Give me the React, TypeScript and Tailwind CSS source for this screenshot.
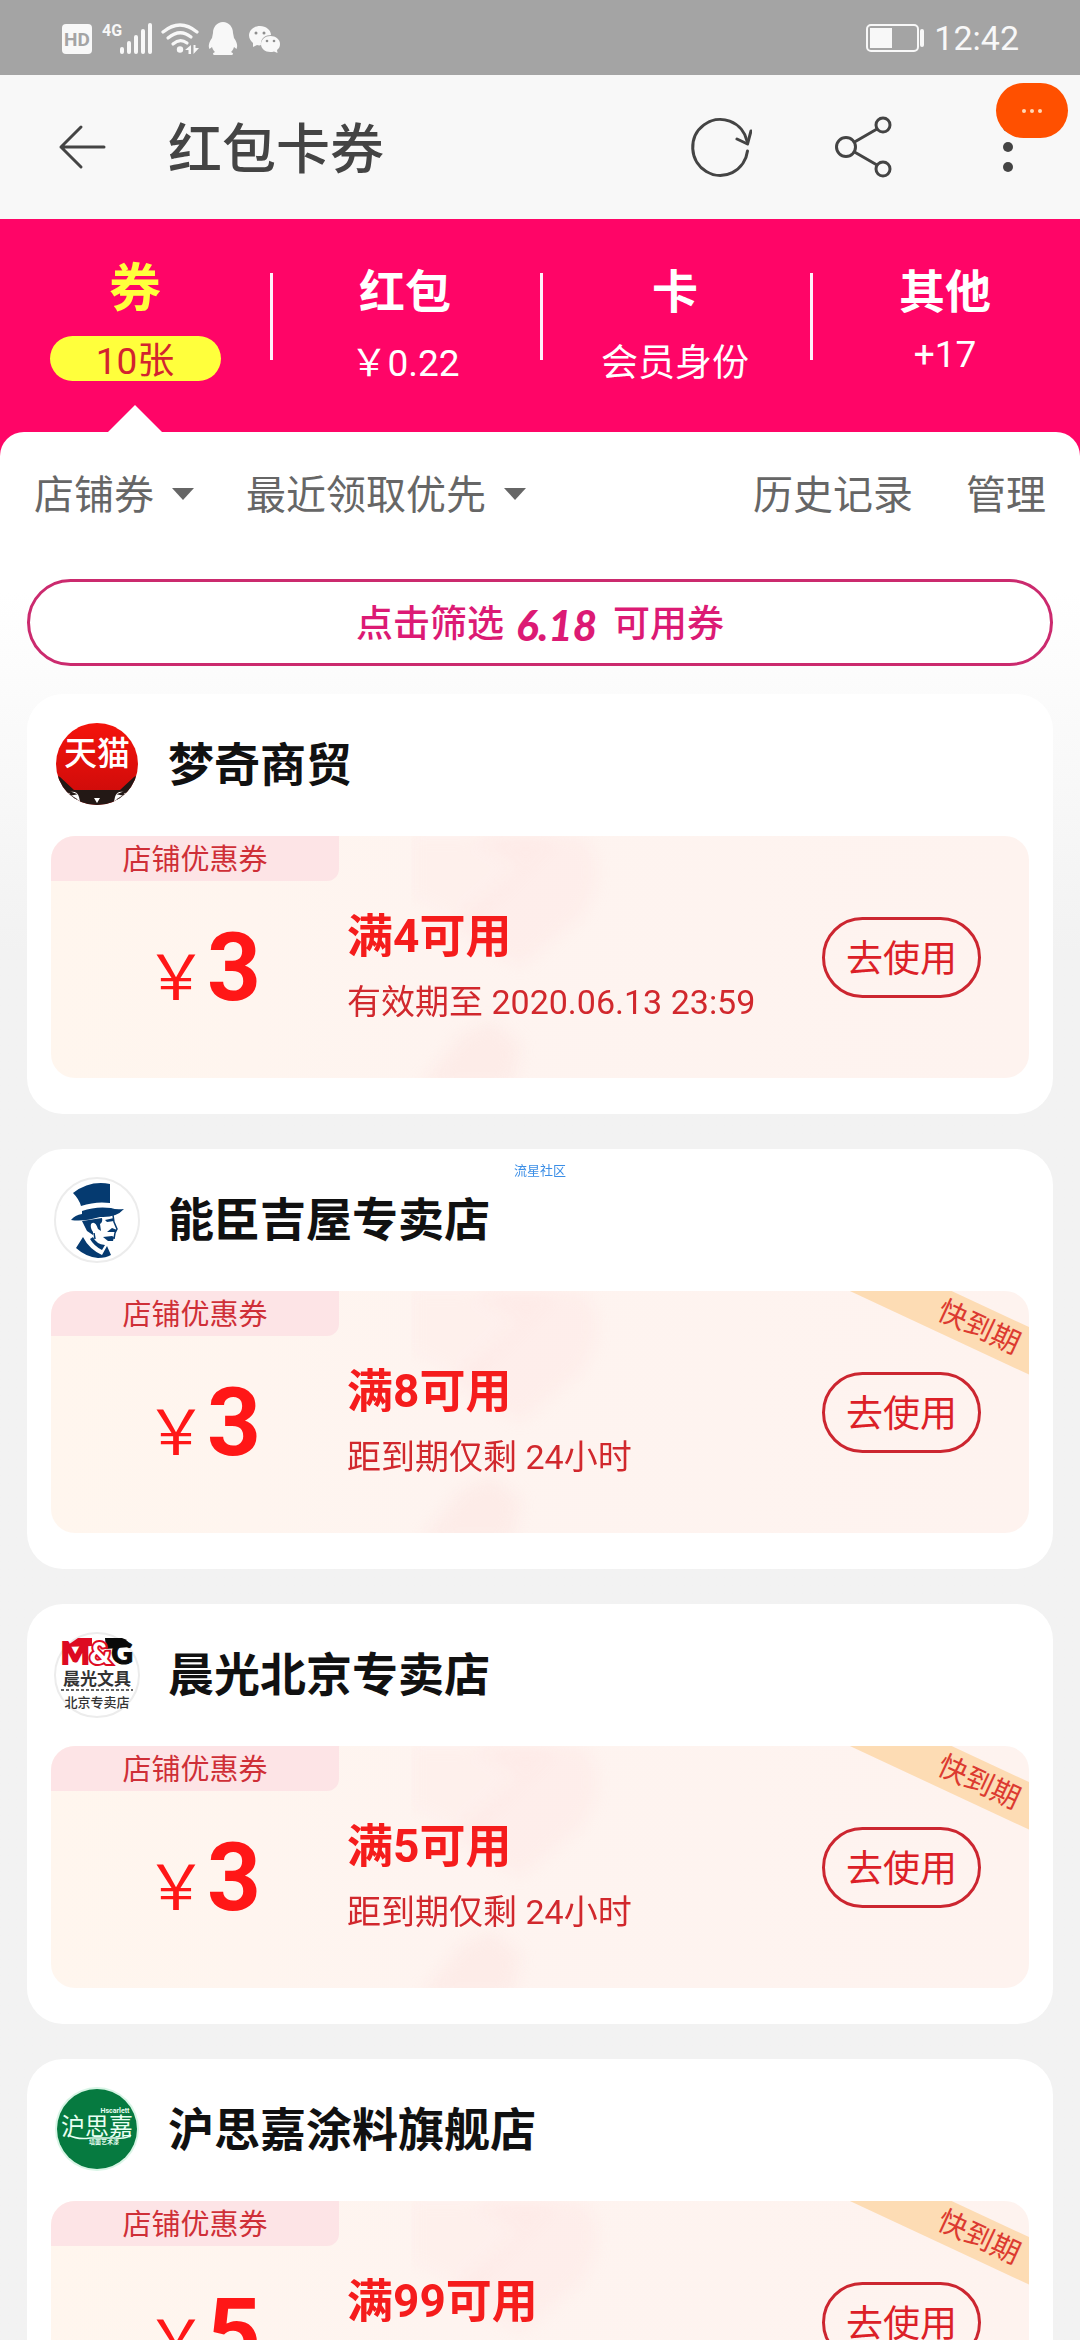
import { useState } from "react";
import type { ReactNode } from "react";

type Tab = {
  id: string;
  name: string;
  info: string;
};

type Coupon = {
  id: string;
  shop: string;
  logo: ReactNode;
  amount: number;
  condition: string;
  expiry: string;
  expiring: boolean;
};

const tabs: Tab[] = [
  { id: "coupon", name: "券", info: "10张" },
  { id: "redpacket", name: "红包", info: "￥0.22" },
  { id: "card", name: "卡", info: "会员身份" },
  { id: "other", name: "其他", info: "+17" },
];

const coupons: Coupon[] = [
  {
    id: "mengqi",
    shop: "梦奇商贸",
    logo: <TmallLogo />,
    amount: 3,
    condition: "满4可用",
    expiry: "有效期至 2020.06.13 23:59",
    expiring: false,
  },
  {
    id: "nengchen",
    shop: "能臣吉屋专卖店",
    logo: <GentlemanLogo />,
    amount: 3,
    condition: "满8可用",
    expiry: "距到期仅剩 24小时",
    expiring: true,
  },
  {
    id: "chenguang",
    shop: "晨光北京专卖店",
    logo: <StationeryLogo />,
    amount: 3,
    condition: "满5可用",
    expiry: "距到期仅剩 24小时",
    expiring: true,
  },
  {
    id: "husijia",
    shop: "沪思嘉涂料旗舰店",
    logo: <PaintLogo />,
    amount: 5,
    condition: "满99可用",
    expiry: "距到期仅剩 24小时",
    expiring: true,
  },
];

function TmallLogo() {
  return (
    <svg viewBox="0 0 86 86" className="size-full" aria-hidden="true">
      <defs>
        <clipPath id="tmall-clip">
          <circle cx="43" cy="42" r="41" />
        </clipPath>
        <linearGradient id="tmall-red" x1="0" y1="0" x2="0" y2="1">
          <stop offset="0" stopColor="#f5140c" />
          <stop offset="1" stopColor="#c80a0a" />
        </linearGradient>
      </defs>
      <g clipPath="url(#tmall-clip)">
        <rect width="86" height="86" fill="url(#tmall-red)" />
        <path d="M0 52 L6 55 L20 68 H66 L80 55 L86 52 V86 H0 Z" fill="#231815" />
        <path d="M12 71 q11 -4 13 4 q1 5 2 8 H16 Z" fill="#fff" />
        <path d="M74 71 q-11 -4 -13 4 q-1 5 -2 8 H70 Z" fill="#fff" />
        <path d="M10 68 l10 4 l-5 1 l8 5" fill="none" stroke="#231815" strokeWidth="2" />
        <path d="M76 68 l-10 4 l5 1 l-8 5" fill="none" stroke="#231815" strokeWidth="2" />
        <path d="M40 76 h6 l-3 5 Z" fill="#fff" />
      </g>
      <text x="43" y="43" textAnchor="middle" fontSize="33" fontWeight="500" fill="#fff">
        天猫
      </text>
    </svg>
  );
}

function GentlemanLogo() {
  return (
    <svg viewBox="0 0 86 86" className="size-full" aria-hidden="true">
      <circle cx="43" cy="43" r="42" fill="#fff" stroke="#ececec" strokeWidth="2" />
      <g fill="#053a70">
        {/* hat */}
        <path d="M19 16 Q36 3 56 7 L56 26 Q42 24 27 29 Q25 22 19 16 Z" />
        <path d="M28 34 Q42 29 57 31 Q62 33 70 32 Q62 41 46 40 Q29 45 17 43 Q21 38 28 37 Z" />
        {/* hair and sideburn */}
        <path d="M28 44 L48 41 Q49 45 46 47 L47 54 L44 52 Q41 43 37 47 Q36 51 39 55 L39 58 L33 54 Z" />
        {/* brow, moustache, chin */}
        <path d="M51 43 L60 41 L60 44 L53 45 Z" />
        <path d="M53 55 L58 51 L63 53 L61 55 Z" />
        <path d="M49 60 L58 59 L60 60 L59 64 L54 64 Z" />
        {/* coat */}
        <path d="M29 60 L22 71 Q32 80 44 81 Q52 81 57 78 L53 69 L48 78 Q35 72 29 60 Z" />
        <path d="M36 62 Q40 69 48 73 L51 68 Q42 67 39 60 Z" />
      </g>
      <g fill="none" stroke="#053a70" strokeWidth="1.5">
        <path d="M59 38 L60 45 L63 52 L61 56 L60 62" />
        <path d="M40 56 L41 62" />
      </g>
    </svg>
  );
}

function StationeryLogo() {
  return (
    <svg viewBox="0 0 86 86" className="size-full" aria-hidden="true">
      <circle cx="43" cy="43" r="42" fill="#fff" stroke="#ececec" strokeWidth="2" />
      <path d="M11 15 L24 6 H38 V14 Z" fill="#dd0a22" />
      <path d="M51 6 H68 Q75 8 76 15 L52 17 Z" fill="#0a0a0a" />
      <text x="43" y="32" textAnchor="middle" fontFamily="Lato, Roboto, sans-serif" fontSize="30" fontWeight="900" paintOrder="stroke">
        <tspan fill="#dd0a22" stroke="#dd0a22" strokeWidth="2">
          M
        </tspan>
        <tspan fill="#fff" stroke="#dd0a22" strokeWidth="4">
          &amp;
        </tspan>
        <tspan fill="#0a0a0a" stroke="#0a0a0a" strokeWidth="1">
          G
        </tspan>
      </text>
      <text x="43" y="53" textAnchor="middle" fontSize="17" fontWeight="700" fill="#333">
        晨光文具
      </text>
      <path d="M7 58 H79" stroke="#333" strokeWidth="1.5" strokeDasharray="3 2" />
      <text x="43" y="75" textAnchor="middle" fontSize="13" fontWeight="500" fill="#333">
        北京专卖店
      </text>
    </svg>
  );
}

function PaintLogo() {
  return (
    <svg viewBox="0 0 86 86" className="size-full" aria-hidden="true">
      <circle cx="43" cy="42" r="42" fill="#d9f5e6" />
      <circle cx="43" cy="42" r="40" fill="#067a40" />
      <g fill="#e8fff2">
        <text x="61" y="26" textAnchor="middle" fontSize="7" fontWeight="700">
          Hscarlett
        </text>
        <text x="43" y="48" textAnchor="middle" fontSize="24">
          沪思嘉
        </text>
        <text x="50" y="57" textAnchor="middle" fontSize="6" fontWeight="700">
          墙面艺术漆
        </text>
      </g>
      <path d="M14 48 Q24 53 36 51 H62 Q73 52 77 48" fill="none" stroke="#e8fff2" strokeWidth="1.5" />
    </svg>
  );
}

function StatusBar() {
  return (
    <div className="flex h-[75px] shrink-0 items-center justify-between bg-[#a4a4a4] px-[61px] text-[#f8f8f8]">
      <svg width="222" height="36" viewBox="61 19 222 36" fill="currentColor" role="img" aria-label="HD 4G">
        <rect x="62" y="23" width="30" height="30" rx="4" />
        <text x="77" y="45" textAnchor="middle" fontSize="19" fontWeight="700" fill="#a4a4a4">
          HD
        </text>
        <text x="102" y="35" fontSize="16" fontWeight="700">
          4G
        </text>
        <rect x="120" y="46" width="4" height="7" rx="2" />
        <rect x="127" y="40" width="4" height="13" rx="2" />
        <rect x="134" y="34" width="4" height="19" rx="2" />
        <rect x="141" y="28" width="4" height="25" rx="2" />
        <rect x="148" y="22" width="4" height="31" rx="2" />
        <g fill="none" stroke="currentColor" strokeWidth="3.2" strokeLinecap="round">
          <path d="M163 31 Q180 17 197 31" />
          <path d="M168 37 Q180 27 191 36" />
          <path d="M173 43 Q180 37 187 42" />
        </g>
        <circle cx="180" cy="48.500" r="3.200" />
        <path d="M191 44 v9 h-2.500 v-4 h-3.500 Z M193.500 53 v-9 h2 v3 h3.500 Z" />
        <path d="M223 21 C229 21 233 26 233 32 L234 37 C237 41 238 45 236.500 48 L234 46 C233 49 232 50 231 51 C233 52 234 53 232 54 H214 C212 53 213 52 215 51 C214 50 213 49 212 46 L209.500 48 C208 45 209 41 212 37 L213 32 C213 26 217 21 223 21 Z" />
        <path d="M260 25 c6 0 11 4 11 9 c-6 0 -11 4 -10 10 c-2 1 -3 0 -4 0 l-4 2 l0 -4 c-2 -2 -4 -4 -4 -7.500 c0 -5.500 5 -9.500 11 -9.500 Z" />
        <path d="M270.500 35 c5 0 9.500 3.500 9.500 8 c0 3 -1 4.500 -3 6 l0.500 3 l-3.500 -1.500 c-7 2 -13 -2 -13 -7.500 c0 -4.500 4.500 -8 9.500 -8 Z" />
        <g fill="#8f8f8f">
          <circle cx="256" cy="32" r="1.500" />
          <circle cx="264" cy="32" r="1.500" />
          <circle cx="267" cy="40" r="1.300" />
          <circle cx="274" cy="40" r="1.300" />
        </g>
      </svg>
      <div className="flex items-center gap-2">
        <svg width="60" height="28" viewBox="0 0 60 28" role="img" aria-label="电量">
          <rect x="1" y="1" width="51" height="26" rx="4" fill="none" stroke="currentColor" strokeWidth="2" />
          <rect x="4" y="4" width="22" height="20" fill="currentColor" />
          <rect x="54" y="5" width="4" height="18" rx="2" fill="currentColor" />
        </svg>
        <span className="text-[34px] leading-none">12:42</span>
      </div>
    </div>
  );
}

function TitleBar() {
  return (
    <header className="relative flex h-[144px] shrink-0 items-center bg-[#f8f8f8] pr-[47px] pl-[58px] text-[#444]">
      <button type="button" aria-label="返回">
        <svg width="48" height="48" viewBox="0 0 48 48" fill="none" stroke="currentColor" strokeWidth="3" strokeLinecap="round" strokeLinejoin="round">
          <path d="M46 24 H3 M23 4 L3 24 L23 44" />
        </svg>
      </button>
      <h1 className="ml-[62px] pt-2 text-[54px] leading-none font-medium">红包卡券</h1>
      <button type="button" aria-label="刷新" className="ml-auto">
        <svg width="64" height="64" viewBox="0 0 64 64" fill="none" stroke="currentColor" strokeWidth="3" strokeLinecap="round" strokeLinejoin="round">
          <path d="M59.500 36 A27.500 28 0 1 1 59 26" />
          <path d="M49 24 L59.500 29 L63 16" />
        </svg>
      </button>
      <button type="button" aria-label="分享" className="ml-20">
        <svg width="60" height="64" viewBox="0 0 60 64" fill="none" stroke="currentColor" strokeWidth="3">
          <circle cx="14" cy="32" r="9.500" />
          <circle cx="51" cy="10" r="7" />
          <circle cx="51" cy="54" r="7" />
          <path d="M22.500 27 L45 14 M22.500 37 L45 50" />
        </svg>
      </button>
      <button type="button" aria-label="更多" className="ml-[91px]">
        <svg width="50" height="64" viewBox="0 0 50 64" fill="currentColor">
          <circle cx="25" cy="12" r="5" />
          <circle cx="25" cy="32" r="5" />
          <circle cx="25" cy="52" r="5" />
        </svg>
      </button>
      <span className="absolute top-2 right-3 flex h-[55px] w-[72px] items-center justify-center gap-1 rounded-full bg-[#ff5000]">
        <i className="size-1 rounded-full bg-[#ffd9b8]" />
        <i className="size-1 rounded-full bg-[#ffd9b8]" />
        <i className="size-1 rounded-full bg-[#ffd9b8]" />
      </span>
    </header>
  );
}

function CouponCard({ coupon }: { coupon: Coupon }) {
  return (
    <article className="rounded-[36px] bg-white px-6 pt-7 pb-9">
      <a href="#shop" className="mb-7 ml-[3px] flex items-center gap-7">
        <span className="size-[86px] shrink-0">{coupon.logo}</span>
        <h2 className="text-[46px] leading-none font-bold text-[#111]">{coupon.shop}</h2>
      </a>

      <div className="relative flex min-h-[242px] overflow-hidden rounded-3xl bg-linear-to-r from-[#fff6ee] via-[#fef4f0] via-40% to-[#fef3ef]">
        <svg className="absolute top-0 left-[360px] h-full w-[300px]" viewBox="0 0 300 242" aria-hidden="true">
          <g fill="#fdd9d8" className="blur-sm">
            <path d="M0 0 H150 L60 90 L0 60 Z" opacity="0.120" />
            <path d="M60 0 H170 Q200 30 170 80 L110 130 L40 90 L110 30 Z" opacity="0.200" />
            <path d="M10 250 L50 200 L80 185 L110 210 L100 250 Z" opacity="0.300" />
          </g>
        </svg>

        <div className="relative w-[288px] shrink-0">
          <p className="h-[45px] rounded-br-xl bg-[#fde4e6] text-center text-[29px] leading-[48px] text-[#cf2f37]">
            店铺优惠券
          </p>
          <p className="mt-10 flex items-baseline justify-center pl-4 leading-none text-[#ff1717]">
            <span className="text-[62px] leading-none">￥</span>
            <span className="text-[94px] leading-none font-bold">{coupon.amount}</span>
          </p>
        </div>

        <div className="relative flex-1 pt-[72px] pl-2">
          <h3 className="text-[46px] leading-[56px] font-bold text-[#f51c1c]">{coupon.condition}</h3>
          <p className="mt-4 text-[34px] leading-[44px] text-[#d1282d]">{coupon.expiry}</p>
        </div>

        <button
          type="button"
          className="relative mr-12 h-[81px] w-[159px] shrink-0 self-center rounded-full border-3 border-[#cc2630] pt-1 text-[37px] leading-none text-[#dc2027]"
        >
          去使用
        </button>

        {coupon.expiring && (
          <span className="absolute top-[15px] -right-[100px] flex h-[43px] w-[300px] rotate-25 items-center justify-center bg-[#fddcb4] text-[29px] leading-none text-[#dc3a30]">
            快到期
          </span>
        )}
      </div>
    </article>
  );
}

function Caret() {
  return (
    <svg width="22" height="12" viewBox="0 0 22 12" fill="#666" className="mb-1" aria-hidden="true">
      <path d="M0 0 H22 L11 12 Z" />
    </svg>
  );
}

export default function App() {
  const [activeTab, setActiveTab] = useState("coupon");

  return (
    <div className="flex h-screen flex-col overflow-hidden bg-[#f2f2f2] font-[Roboto,'Noto_Sans_CJK_SC',sans-serif]">
      <StatusBar />
      <TitleBar />

      <main className="min-h-0 flex-1 overflow-y-auto bg-[#ff0567] [scrollbar-width:none]">
        <nav className="grid h-[213px] grid-cols-4 text-center text-white">
          {tabs.map((tab, index) => {
            const active = tab.id === activeTab;
            return (
              <button
                key={tab.id}
                type="button"
                onClick={() => setActiveTab(tab.id)}
                className="relative flex flex-col items-center pt-[43px]"
              >
                {index > 0 && <i className="absolute top-[54px] left-0 h-[87px] w-[3px] bg-[#fff0f8]" />}
                {active ? (
                  <>
                    <span className="text-[52px] leading-[56px] font-bold text-[#ffff3c]">{tab.name}</span>
                    <span className="mt-[18px] h-[45px] w-[171px] rounded-full bg-[#ffff3c] text-[37px] leading-[52px] text-[#d2242f]">
                      {tab.info}
                    </span>
                    <svg className="absolute bottom-0" width="54" height="27" viewBox="0 0 54 27" fill="#fff" aria-hidden="true">
                      <path d="M27 0 L54 27 H0 Z" />
                    </svg>
                  </>
                ) : (
                  <>
                    <span className="text-[46px] leading-[60px] font-bold">{tab.name}</span>
                    <span className="mt-[11px] text-[37px] leading-[normal]">{tab.info}</span>
                  </>
                )}
              </button>
            );
          })}
        </nav>

        <section className="rounded-t-3xl bg-linear-to-b from-white from-[160px] to-[#f2f2f2] to-[520px] px-[27px] pb-9">
          <div className="flex h-[147px] items-start px-[7px] pt-10 text-[40px] leading-[48px] text-[#666]">
            <label className="flex items-center gap-[18px]">
              <select aria-label="券类型" className="appearance-none">
                <option>店铺券</option>
              </select>
              <Caret />
            </label>
            <label className="ml-[52px] flex items-center gap-[18px]">
              <select aria-label="排序方式" className="appearance-none">
                <option>最近领取优先</option>
              </select>
              <Caret />
            </label>
            <a href="#history" className="ml-auto">
              历史记录
            </a>
            <a href="#manage" className="ml-[53px]">
              管理
            </a>
          </div>

          <button
            type="button"
            className="flex h-[87px] w-full items-center justify-center rounded-full border-3 border-[#cb2a6e] bg-white pt-1 text-[37px] leading-none font-medium text-[#dc1a74]"
          >
            点击筛选
            <span className="mr-4 ml-3 font-[Lato] text-[42px] leading-none font-black italic">6.18</span>
            可用券
          </button>

          <div className="mt-7 flex flex-col gap-[35px]">
            {coupons.map((coupon) => (
              <CouponCard key={coupon.id} coupon={coupon} />
            ))}
          </div>
        </section>
      </main>

      <p className="pointer-events-none fixed top-1/2 left-1/2 -translate-x-1/2 -translate-y-1/2 text-[13px] leading-none text-[#3b8ee6]">
        流星社区
      </p>
    </div>
  );
}
